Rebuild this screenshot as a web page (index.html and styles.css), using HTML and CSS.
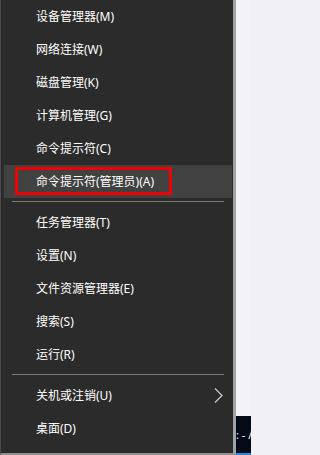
FILE: index.html
```html
<!DOCTYPE html>
<html lang="zh-CN">
<head>
<meta charset="utf-8">
<link rel="stylesheet" href="styles.css">
</head>
<body>
<div class="screen">
  <nav class="menu">
    <div class="item">设备管理器(M)</div>
    <div class="item">网络连接(W)</div>
    <div class="item">磁盘管理(K)</div>
    <div class="item">计算机管理(G)</div>
    <div class="item">命令提示符(C)</div>
    <div class="item active">命令提示符(管理员)(A)</div>
    <div class="sep"></div>
    <div class="item">任务管理器(T)</div>
    <div class="item">设置(N)</div>
    <div class="item">文件资源管理器(E)</div>
    <div class="item">搜索(S)</div>
    <div class="item">运行(R)</div>
    <div class="sep"></div>
    <div class="item">关机或注销(U)
      <svg class="chev" width="9" height="15" viewBox="0 0 9 15"><path d="M1 0.5 L8 7.5 L1 14.5" fill="none" stroke="#c8ccd4" stroke-width="1.2"/></svg>
    </div>
    <div class="item">桌面(D)</div>
  </nav>
  <div class="side">
    <div class="side-top"></div>
    <div class="side-bottom"><span class="title">: - /</span></div>
  </div>
</div>
</body>
</html>
```
FILE: styles.css
```css
html, body {
  margin: 0;
  padding: 0;
  background: #f0f0f5;
}
.screen {
  display: flex;
  width: 251px;
  height: 455px;
  overflow: hidden;
  font-family: "Noto Sans", "Noto Sans CJK SC", sans-serif;
}
.menu {
  width: 232px;
  flex: none;
  background: #2b2b2b;
  border-left: 1px solid #4a4a4a;
  border-right: 3px solid #a2a2a2;
  border-bottom: 2px solid #8e8e8e;
  box-sizing: content-box;
  height: 453px;
  display: flex;
  flex-direction: column;
}
.item {
  height: 33px;
  line-height: 32px;
  padding-left: 35px;
  font-size: 12px;
  color: #ffffff;
  display: flex;
  align-items: center;
  position: relative;
  white-space: nowrap;
}
.item.active {
  background: #414141;
  margin-left: 3px;
  margin-right: 1px;
  padding-left: 32px;
}
.item.active::after {
  content: "";
  position: absolute;
  left: 11px;
  top: 2px;
  width: 157px;
  height: 28px;
  box-sizing: border-box;
  border: 3px solid #f00000;
}
.sep {
  height: 8px;
  flex: none;
  position: relative;
}
.sep::before {
  content: "";
  display: block;
  margin: 3px 9px 0 11px;
  height: 1px;
  background: #7a7a7a;
}
.chev {
  margin-left: auto;
  margin-right: 10px;
}
.side {
  flex: 1;
  display: flex;
  flex-direction: column;
}
.side-top {
  height: 416px;
  background: #f3f3f7;
}
.side-bottom {
  flex: 1;
  background: #050b16;
  border-bottom: 2px solid #1e88e5;
  color: #ffffff;
  font-size: 11px;
  line-height: 36px;
  white-space: nowrap;
  overflow: hidden;
  padding-left: 0;
}
.title {
  display: block;
  margin-top: 1px;
}
```
